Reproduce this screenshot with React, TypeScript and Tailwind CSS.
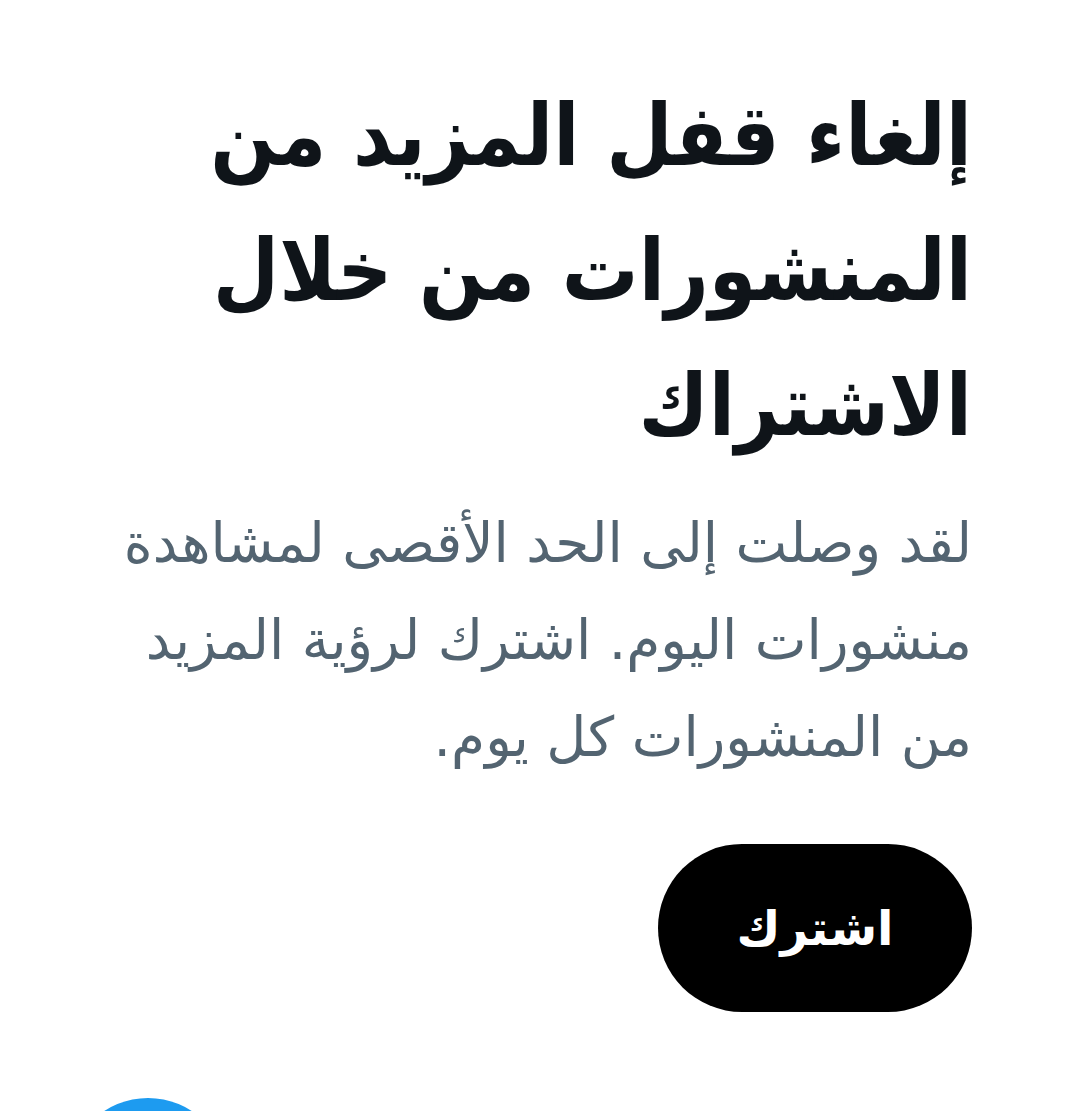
export default function App() {
  return (
    <div className="h-[1111px] bg-white overflow-hidden" style={{ fontFamily: '"DejaVu Sans", "Noto Sans", sans-serif' }}>
      <div dir="rtl" className="pr-[105px] pl-[100px] pt-[68px]">
        <h1 className="font-['DejaVu_Sans_Condensed','DejaVu_Sans',sans-serif] text-[85px] leading-[135px] font-bold text-[#0f1419]">
          إلغاء قفل المزيد من المنشورات من خلال الاشتراك
        </h1>
        <p className="mt-[22px] text-[55px] leading-[97px] text-[#536471]">
          لقد وصلت إلى الحد الأقصى لمشاهدة منشورات اليوم. اشترك لرؤية المزيد من المنشورات كل يوم.
        </p>
        <div className="mt-[58px] flex">
          <button className="h-[168px] w-[314px] rounded-full bg-black text-white text-[48px] font-bold">
            اشترك
          </button>
        </div>
      </div>
      <div className="mt-[86px] ml-[68px] h-[160px] w-[160px] rounded-full bg-[#1d9bf0]" />
    </div>
  );
}
